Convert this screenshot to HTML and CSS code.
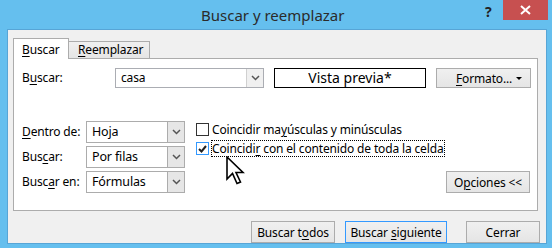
FILE: index.html
```html
<!DOCTYPE html>
<html lang="es">
<head>
    <meta charset="UTF-8">
    <title>Buscar y reemplazar</title>
    <link rel="stylesheet" href="styles.css">
</head>
<body>
    <div class="window">
        <!-- Title bar -->
        <div class="titlebar">
            <div class="title">Buscar y reemplazar</div>
            <div class="help">?</div>
            <div class="close">
                <svg width="11" height="10" viewBox="0 0 11 10"><path d="M1 1 L10 9 M10 1 L1 9" stroke="#fff" stroke-width="2"/></svg>
            </div>
        </div>

        <div class="client">
            <!-- Tabs -->
            <div class="tabs">
                <div class="tab active"><u>B</u>uscar</div>
                <div class="tab"><u>R</u>eemplazar</div>
            </div>

            <div class="panel">
                <div class="find-row">
                    <div class="lbl find-lbl">B<u>u</u>scar:</div>
                    <div class="combo find-combo">
                        <span class="value">casa</span>
                        <span class="arrow"><svg width="9" height="6" viewBox="0 0 9 6"><path d="M1 1 L4.5 4.5 L8 1" fill="none" stroke="#555" stroke-width="1.5"/></svg></span>
                    </div>
                    <div class="preview">Vista previa*</div>
                    <div class="btn format-btn">
                        <span><u>F</u>ormato...</span>
                        <svg width="6" height="3" viewBox="0 0 6 3"><path d="M0 0 L6 0 L3 3 Z" fill="#000"/></svg>
                    </div>
                </div>

                <div class="options">
                    <div class="fields">
                        <div class="lbl"><u>D</u>entro de:</div>
                        <div class="combo select">
                            <span class="value">Hoja</span>
                            <span class="arrow"><svg width="9" height="6" viewBox="0 0 9 6"><path d="M1 1 L4.5 4.5 L8 1" fill="none" stroke="#555" stroke-width="1.5"/></svg></span>
                        </div>
                        <div class="lbl">Bus<u>c</u>ar:</div>
                        <div class="combo select">
                            <span class="value">Por filas</span>
                            <span class="arrow"><svg width="9" height="6" viewBox="0 0 9 6"><path d="M1 1 L4.5 4.5 L8 1" fill="none" stroke="#555" stroke-width="1.5"/></svg></span>
                        </div>
                        <div class="lbl">Busc<u>a</u>r en:</div>
                        <div class="combo select">
                            <span class="value">Fórmulas</span>
                            <span class="arrow"><svg width="9" height="6" viewBox="0 0 9 6"><path d="M1 1 L4.5 4.5 L8 1" fill="none" stroke="#555" stroke-width="1.5"/></svg></span>
                        </div>
                    </div>

                    <div class="checks">
                        <div class="check">
                            <span class="box"></span>
                            <span class="check-text">Coincidir ma<u>y</u>úsculas y minúsculas</span>
                        </div>
                        <div class="check">
                            <span class="box checked"><svg width="9" height="8" viewBox="0 0 9 8"><path d="M1 4 L3.5 6.5 L8 1" fill="none" stroke="#222" stroke-width="2"/></svg></span>
                            <span class="check-text focus">Coincidi<u>r</u> con el contenido de toda la celda</span>
                        </div>
                        <svg class="cursor" width="20" height="30" viewBox="0 0 20 30">
                            <path d="M1 1 L1 23 L6.5 17.5 L11 27.5 L14.5 26 L10 16.5 L17 16.5 Z" fill="#fff" stroke="#000" stroke-width="1.6"/>
                        </svg>
                    </div>

                    <div class="opt-col">
                        <div class="btn opt-btn"><span>O<u>p</u>ciones &lt;&lt;</span></div>
                    </div>
                </div>
            </div>

            <!-- Dialog buttons -->
            <div class="actions">
                <div class="btn act-btn w-all"><span>Buscar t<u>o</u>dos</span></div>
                <div class="btn act-btn w-next default"><span>Buscar <u>s</u>iguiente</span></div>
                <div class="btn act-btn w-close"><span>Cerrar</span></div>
            </div>
        </div>
    </div>
</body>
</html>
```

FILE: styles.css
```css
body {
    margin: 0;
    background: #fff;
    font-family: 'Noto Sans', 'Open Sans', sans-serif;
    font-size: 12px;
    letter-spacing: -0.15px;
    color: #000;
}
.window {
    width: 552px;
    height: 248px;
    box-sizing: border-box;
    background: #65bfee;
    padding: 0 5px 7px 7px;
    display: flex;
    flex-direction: column;
}
.titlebar {
    height: 29px;
    display: flex;
    align-items: flex-start;
    flex-shrink: 0;
}
.title {
    flex: 1;
    padding: 5px 0 0 194px;
    font-size: 15px;
    letter-spacing: 0;
    color: #2b2b2b;
}
.help {
    width: 18px;
    margin-top: 2px;
    font-size: 14px;
    font-weight: bold;
    color: #222;
}
.close {
    width: 45px;
    height: 20px;
    background: #c75050;
    display: flex;
    align-items: center;
    justify-content: center;
    margin-right: -1px;
}
u {
    text-decoration: underline;
    text-underline-offset: 2px;
}
.client {
    flex: 1;
    background: #f0f0f0;
    border: 1px solid #57a5d6;
    padding: 7px 8px 0 5px;
    display: flex;
    flex-direction: column;
}
.tabs {
    display: flex;
    align-items: flex-end;
    height: 21px;
}
.tab {
    height: 16px;
    padding: 0 6px 0 9px;
    border: 1px solid #acacac;
    border-bottom: none;
    background: linear-gradient(#f0f0f0, #e5e5e5);
    line-height: 16px;
    margin-left: -1px;
}
.tab.active {
    height: 20px;
    line-height: 22px;
    background: #fff;
    margin-left: 0;
    width: 39px;
    position: relative;
    top: 1px;
    padding: 0 7px 0 8px;
    z-index: 1;
}
.panel {
    background: #fff;
    border: 1px solid #acacac;
    height: 142px;
    padding: 9px 6px 0 8px;
}
.find-row {
    display: flex;
    align-items: center;
    height: 20px;
}
.lbl {
    height: 22px;
    line-height: 22px;
}
.find-lbl {
    width: 93px;
}
.combo {
    display: flex;
    border: 1px solid #acacac;
    background: #fff;
    box-sizing: border-box;
}
.combo .value {
    flex: 1;
    padding-left: 5px;
    line-height: 18px;
}
.combo .arrow {
    width: 16px;
    border-left: 1px solid #acacac;
    background: #e6e6e6;
    display: flex;
    align-items: center;
    justify-content: center;
}
.find-combo {
    width: 149px;
    height: 20px;
    border-color: #abadb3;
}
.find-combo .arrow {
    background: #f0f0f0;
    border-left-color: #d0d0d0;
}
.preview {
    width: 152px;
    height: 20px;
    box-sizing: border-box;
    border: 1px solid #000;
    margin-left: 10px;
    text-align: center;
    font-size: 14px;
    letter-spacing: 0;
    line-height: 18px;
}
.btn {
    box-sizing: border-box;
    border: 1px solid #acacac;
    background: linear-gradient(#f0f0f0, #e5e5e5);
    display: flex;
    align-items: center;
    justify-content: center;
    white-space: nowrap;
}
.format-btn {
    width: 95px;
    height: 20px;
    margin-left: 10px;
    justify-content: space-between;
    padding: 0 8px 0 19px;
}
.options {
    display: flex;
    margin-top: 33px;
}
.fields {
    display: grid;
    grid-template-columns: 64px 99px;
    row-gap: 3px;
}
.select {
    height: 22px;
}
.select .value {
    line-height: 20px;
    font-size: 12.5px;
}
.checks {
    margin-left: 11px;
    display: flex;
    flex-direction: column;
    gap: 2px;
    position: relative;
}
.check {
    display: flex;
    align-items: center;
    height: 17px;
    gap: 3px;
    white-space: nowrap;
}
.box {
    width: 13px;
    height: 13px;
    box-sizing: border-box;
    border: 1px solid #333;
    background: #fff;
    display: flex;
    align-items: center;
    justify-content: center;
}
.box.checked {
    border-color: #3399ff;
}
.check-text {
    padding-right: 1px;
}
.focus {
    outline: 1px dotted #000;
    line-height: 15px;
}
.cursor {
    position: absolute;
    left: 30px;
    top: 35px;
}
.opt-col {
    flex: 1;
    display: flex;
    justify-content: flex-end;
    align-items: flex-end;
}
.opt-btn {
    width: 84px;
    height: 22px;
    margin-right: 1px;
}
.actions {
    display: flex;
    justify-content: flex-end;
    margin-top: 10px;
    margin-right: -2px;
}
.act-btn {
    height: 22px;
    margin-left: 10px;
}
.w-all { width: 84px; }
.w-next { width: 102px; }
.w-close { width: 74px; margin-left: 19px; }
.default {
    border-color: #3399ff;
}
```
